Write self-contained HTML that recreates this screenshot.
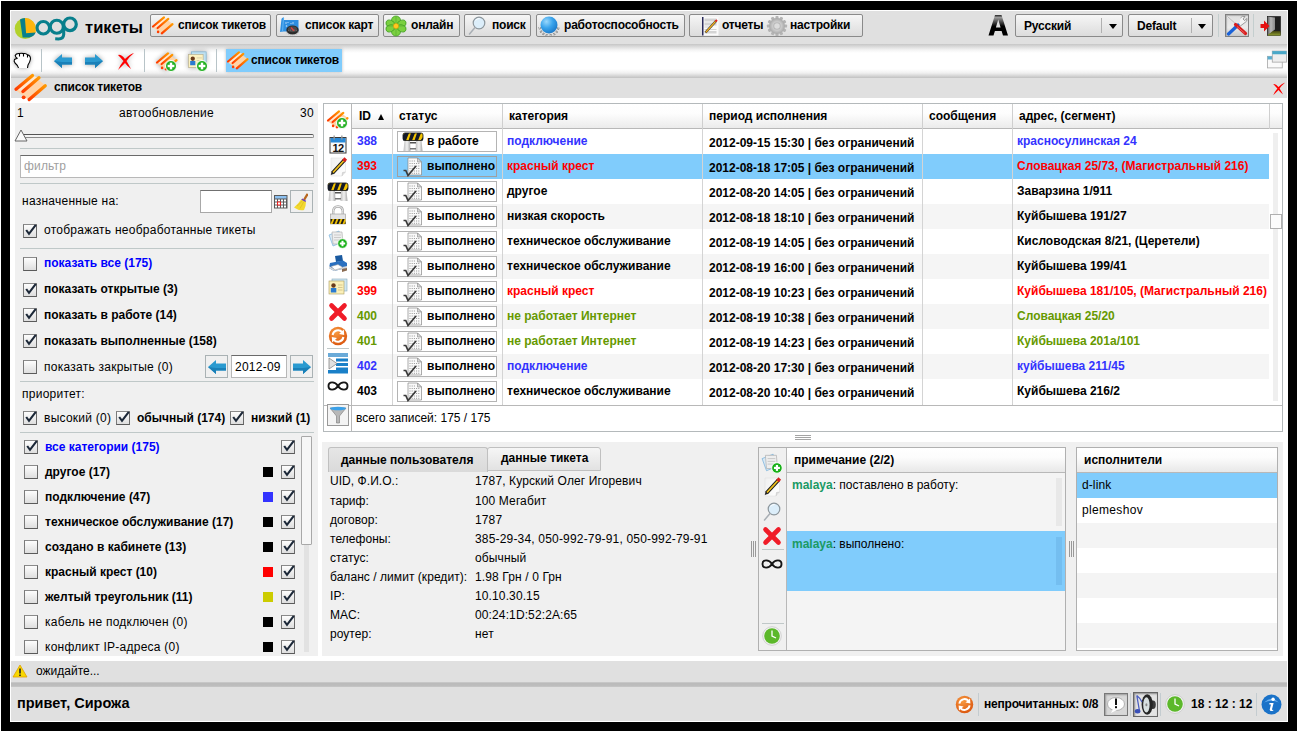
<!DOCTYPE html>
<html><head><meta charset="utf-8">
<style>
*{box-sizing:border-box;}
html,body{margin:0;padding:0;width:1298px;height:732px;overflow:hidden;background:#fff;font-family:"Liberation Sans",sans-serif;font-size:12px;color:#000;}
.a{position:absolute;}
#frame{left:1px;top:1px;width:1296px;height:730px;background:#000;}
#inner{left:10px;top:10px;width:1278px;height:712px;background:#fff;}
#tb1{left:11px;top:11px;width:1276px;height:33px;background:#e1e1e1;}
#tb2{left:11px;top:44px;width:1276px;height:33px;background:#fff;}
#title{left:11px;top:77px;width:1276px;height:21px;background:#e1e1e1;}
#left{left:15px;top:103px;width:303px;height:553px;background:#f0f0f0;}
#grid{left:323px;top:103px;width:959px;height:328px;background:#fff;border:1px solid #aaa;}
#lower{left:322px;top:442px;width:960px;height:214px;background:#f0f0f0;}
#status{left:11px;top:661px;width:1276px;height:21px;background:#e1e1e1;}
#bar{left:11px;top:682px;width:1276px;height:4px;background:#bbb;}
#bottom{left:11px;top:686px;width:1276px;height:35px;background:#e1e1e1;}
.btn{position:absolute;height:23px;letter-spacing:-0.2px;border:1px solid #8a8a8a;border-radius:2px;background:linear-gradient(#f6f6f6,#dcdcdc);font-weight:bold;line-height:21px;white-space:nowrap;}
.b{font-weight:bold;}
.cb{position:absolute;width:14px;height:14px;border:1px solid #6e6e6e;border-color:#8a8a8a #6a6a6a #5a5a5a #7a7a7a;background:linear-gradient(#fdfdfd,#dedede);}
.sep{position:absolute;height:1px;background:#bfc8c8;}
.t{position:absolute;white-space:nowrap;line-height:14px;letter-spacing:0.25px;}
.t.b{letter-spacing:0;}
.bl{color:#0000ff;}

</style></head><body>
<div class="a" id="frame"></div>
<div class="a" id="inner"></div>

<svg width="0" height="0" style="position:absolute">
<defs>
<linearGradient id="g-or" x1="0" y1="1" x2="1" y2="0"><stop offset="0" stop-color="#ff3c00"/><stop offset="1" stop-color="#ff9800"/></linearGradient>
<symbol id="i-list" viewBox="0 0 24 22">
<polygon points="1.8,12.2 13,2.2 22,9.2 10.8,19" fill="#ffd4a8"/>
<polygon points="2,11.5 13,2.4 17.3,3.9 6.6,13" fill="#ffe8d0"/>
<g stroke="url(#g-or)" stroke-width="2.2" stroke-linecap="round">
<line x1="2" y1="11.5" x2="13" y2="2.4"/><line x1="6.6" y1="13" x2="17.3" y2="3.9"/><line x1="10.8" y1="18.4" x2="21.5" y2="9.2"/></g>
<circle cx="7.1" cy="16.9" r="1.3" fill="#ff4000"/>
</symbol>
<symbol id="i-plus" viewBox="0 0 10 10">
<circle cx="5" cy="5" r="4.6" fill="#22b022" stroke="#fff" stroke-width="0.8"/>
<rect x="2.2" y="4" width="5.6" height="2" fill="#fff"/><rect x="4" y="2.2" width="2" height="5.6" fill="#fff"/>
</symbol>
<symbol id="i-map" viewBox="0 0 22 20">
<path d="M1,16 L2.5,3 Q3,1 5,1.5 L5,4 L19.5,4 L19.5,15.5 L4,15.5 Q2,15.5 1,16 Z" fill="#2e8ee0"/>
<path d="M4.5,2 L3.5,15.5" stroke="#5ab0f0" stroke-width="1.2"/>
<g fill="#bfe0fa"><circle cx="7" cy="7" r="0.8"/><circle cx="9" cy="6.5" r="0.6"/><circle cx="7.5" cy="10" r="0.8"/><circle cx="12" cy="7.5" r="0.6"/><circle cx="14" cy="7" r="0.8"/></g>
<ellipse cx="13.5" cy="14" rx="6.2" ry="4.6" fill="#2a2a2a"/>
<ellipse cx="13.5" cy="13.2" rx="4.6" ry="3" fill="#4a4a4a"/>
<ellipse cx="13.5" cy="16.5" rx="6" ry="2.5" fill="none" stroke="#999" stroke-width="0.6" stroke-dasharray="1 1"/>
<path d="M12,11.5 L15,14.8" stroke="#e04040" stroke-width="1.3"/>
</symbol>
<symbol id="i-icq" viewBox="0 0 22 22">
<g fill="#7ad040" stroke="#3e9a22" stroke-width="0.7">
<ellipse cx="11" cy="5.6" rx="4.6" ry="4.6"/><ellipse cx="11" cy="16.4" rx="4.6" ry="4.6"/>
<ellipse cx="5.2" cy="8.6" rx="4.4" ry="3.4" transform="rotate(20 5.2 8.6)"/><ellipse cx="16.8" cy="8.6" rx="4.4" ry="3.4" transform="rotate(-20 16.8 8.6)"/>
<ellipse cx="5.2" cy="13.4" rx="4.4" ry="3.4" transform="rotate(-20 5.2 13.4)"/><ellipse cx="16.8" cy="13.4" rx="4.4" ry="3.4" transform="rotate(20 16.8 13.4)"/>
</g>
<g stroke="#5ab030" stroke-width="0.7"><line x1="11" y1="2" x2="11" y2="20"/><line x1="1.5" y1="11" x2="20.5" y2="11"/></g>
<circle cx="11" cy="11" r="2.6" fill="#ffc820" stroke="#e09000" stroke-width="0.5"/>
</symbol>
<symbol id="i-search" viewBox="0 0 20 20">
<circle cx="12" cy="8" r="5.8" fill="#dceefa" stroke="#8c969c" stroke-width="1.2"/>
<path d="M8.5,5.5 Q10,3.5 12.5,3.5" fill="none" stroke="#fff" stroke-width="1"/>
<line x1="8" y1="12.5" x2="2.5" y2="19" stroke="#a8aeb4" stroke-width="1.5" stroke-linecap="round"/>
</symbol>
<symbol id="i-globe" viewBox="0 0 24 20">
<radialGradient id="g-globe" cx="0.35" cy="0.3" r="0.75"><stop offset="0" stop-color="#9ad8fc"/><stop offset="0.5" stop-color="#3aa4ec"/><stop offset="1" stop-color="#1a78c8"/></radialGradient>
<path d="M2.5,11 Q3.5,19 12,19.5 Q20.5,19 21.5,11" fill="none" stroke="#666" stroke-width="2" stroke-dasharray="2 1.6"/>
<path d="M2.5,11 Q3.5,19 12,19.5 Q20.5,19 21.5,11" fill="none" stroke="#eee" stroke-width="1" stroke-dasharray="2 1.6"/>
<circle cx="12" cy="9" r="8.5" fill="url(#g-globe)"/>
</symbol>
<symbol id="i-report" viewBox="0 0 18 20">
<rect x="1" y="1" width="16.5" height="18.5" fill="#fafafa"/>
<rect x="1" y="1" width="1.5" height="18.5" fill="#2a2a5a"/>
<g fill="#d4d4d4"><rect x="3.5" y="2.5" width="12" height="3"/><rect x="3.5" y="6.5" width="12" height="3"/><rect x="3.5" y="10.5" width="8" height="1"/><rect x="3.5" y="13" width="12" height="1"/><rect x="3.5" y="15" width="12" height="2.5"/></g>
<line x1="4.5" y1="16.5" x2="15" y2="5" stroke="#333" stroke-width="2.4"/>
<line x1="4.8" y1="16.2" x2="14.7" y2="5.3" stroke="#f0b020" stroke-width="1.3"/>
<line x1="14.5" y1="5.5" x2="16" y2="4" stroke="#e02020" stroke-width="2"/>
</symbol>
<symbol id="i-gear" viewBox="0 0 24 24">
<radialGradient id="g-gear"><stop offset="0.3" stop-color="#e0e0e0"/><stop offset="1" stop-color="#a8a8a8"/></radialGradient>
<g fill="#b4b4b4"><rect x="10.3" y="1" width="3.4" height="5" rx="1" transform="rotate(0 12 12)"/><rect x="10.3" y="1" width="3.4" height="5" rx="1" transform="rotate(30 12 12)"/><rect x="10.3" y="1" width="3.4" height="5" rx="1" transform="rotate(60 12 12)"/><rect x="10.3" y="1" width="3.4" height="5" rx="1" transform="rotate(90 12 12)"/><rect x="10.3" y="1" width="3.4" height="5" rx="1" transform="rotate(120 12 12)"/><rect x="10.3" y="1" width="3.4" height="5" rx="1" transform="rotate(150 12 12)"/><rect x="10.3" y="1" width="3.4" height="5" rx="1" transform="rotate(180 12 12)"/><rect x="10.3" y="1" width="3.4" height="5" rx="1" transform="rotate(210 12 12)"/><rect x="10.3" y="1" width="3.4" height="5" rx="1" transform="rotate(240 12 12)"/><rect x="10.3" y="1" width="3.4" height="5" rx="1" transform="rotate(270 12 12)"/><rect x="10.3" y="1" width="3.4" height="5" rx="1" transform="rotate(300 12 12)"/><rect x="10.3" y="1" width="3.4" height="5" rx="1" transform="rotate(330 12 12)"/></g>
<circle cx="12" cy="12" r="8.6" fill="url(#g-gear)"/>
<circle cx="12" cy="12" r="4.2" fill="#b8b8b8"/><circle cx="12" cy="12" r="3" fill="#dcdcdc"/>
</symbol>

<symbol id="i-redx" viewBox="0 0 20 20">
<path d="M3,4 Q6,3 10,8 Q15,3 19,2 Q14,6 11.5,10 Q14,14 16,18 Q12,15 10,12 Q6,16 3,19 Q5,14 8.5,10 Q5,6 3,4 Z" fill="#f00"/>
</symbol>
<symbol id="i-arrowL" viewBox="0 0 20 16">
<path d="M1,8 L9,1 L9,4.5 L19,4.5 L19,11.5 L9,11.5 L9,15 Z" fill="#2a9ad0"/>
<path d="M1,8 L9,15 L9,11.5 L19,11.5 L19,9 L9,9 Z" fill="#1a80b8"/>
</symbol>
<symbol id="i-hand" viewBox="0 0 18 16">
<path d="M4,15 Q3,11 1,8 Q0.5,6 2.5,6.5 L4,8 L3.5,3 Q4,1 6,1.5 L6.5,2 Q8,0.5 9.5,1.5 Q11,0.5 12.5,1.8 Q14.5,1.5 15.5,3 Q16.5,7 15,11 L14,15 Z" fill="#fff" stroke="#000" stroke-width="1.2" stroke-linejoin="round"/>
</symbol>
<symbol id="i-card" viewBox="0 0 24 22">
<rect x="5" y="1" width="17" height="13" fill="#bfe0f0" stroke="#7ab0d0" stroke-width="0.8"/>
<rect x="1.5" y="4" width="17" height="15" fill="#fdf2c0" stroke="#b8b090" stroke-width="0.8"/>
<circle cx="6.5" cy="9" r="2.5" fill="#6a3a1a"/><rect x="3.5" y="11.5" width="6" height="5" fill="#2a7ad0"/>
<g stroke="#c8c0a0" stroke-width="0.8"><line x1="11" y1="8" x2="17" y2="8"/><line x1="11" y1="11" x2="17" y2="11"/><line x1="11" y1="14" x2="17" y2="14"/></g>
</symbol>
<symbol id="i-windows" viewBox="0 0 20 18">
<rect x="1.5" y="6" width="14" height="11" fill="#fafafa" stroke="#aaa" stroke-width="0.8"/><rect x="1.5" y="6" width="14" height="3" fill="#5aaed0"/>
<rect x="6" y="1" width="13.5" height="10.5" fill="#eee" stroke="#aaa" stroke-width="0.8"/><rect x="6" y="1" width="13.5" height="3" fill="#4aa8c8"/>
</symbol>
<symbol id="i-tools" viewBox="0 0 22 21">
<line x1="1.5" y1="1.5" x2="11" y2="10" stroke="#e8e8e8" stroke-width="1.8"/>
<line x1="1.5" y1="1.5" x2="11" y2="10" stroke="#999" stroke-width="0.6"/>
<path d="M14.5,3 Q16,0.5 19,1.5 L17,4 L18.5,5.5 L21,3.5 Q21.5,6.5 19,7.5 L13,12" fill="#f4f4f4" stroke="#777" stroke-width="0.7"/>
<line x1="2.5" y1="19" x2="12" y2="10" stroke="#1a62d8" stroke-width="3.2" stroke-linecap="round"/>
<line x1="9.5" y1="9.5" x2="19.5" y2="18.5" stroke="#d81c1c" stroke-width="3.2" stroke-linecap="round"/>
<line x1="11" y1="11.5" x2="18.5" y2="18" stroke="#f07070" stroke-width="0.8"/>
</symbol>
<symbol id="i-exit" viewBox="0 0 22 20">
<linearGradient id="g-door" x1="0" x2="1"><stop offset="0" stop-color="#6a6a6a"/><stop offset="0.4" stop-color="#b8b8b8"/><stop offset="1" stop-color="#8a8a8a"/></linearGradient>
<linearGradient id="g-floor" x1="0" y1="0" x2="0" y2="1"><stop offset="0" stop-color="#404010"/><stop offset="1" stop-color="#90a030"/></linearGradient>
<rect x="7.5" y="0.5" width="13" height="19" fill="#1e1e1e" stroke="#111" stroke-width="0.6"/>
<rect x="8" y="15" width="12.5" height="4.5" fill="url(#g-floor)"/>
<path d="M8,0.8 L15,1.5 L15,13.5 L8,18.5 Z" fill="url(#g-door)"/>
<path d="M0.5,8 L4,8 L4,4.5 L9.5,10 L4,15.5 L4,12 L0.5,12 Z" fill="#e41010"/>
</symbol>

<symbol id="i-cal" viewBox="0 0 20 20">
<rect x="2" y="3.5" width="16" height="15.5" fill="#fafafa" stroke="#3a3a3a" stroke-width="1"/>
<rect x="2.5" y="4" width="15" height="4.5" fill="#2a8ad8"/>
<text x="10" y="17.6" text-anchor="middle" font-family="Liberation Sans" font-weight="bold" font-size="11" fill="#111" letter-spacing="-0.5">12</text>
<rect x="5.5" y="1.5" width="1.3" height="4" fill="#999"/><rect x="13.2" y="1.5" width="1.3" height="4" fill="#999"/>
</symbol>
<symbol id="i-pencil" viewBox="0 0 20 20">
<linearGradient id="g-paper" x1="0" y1="0" x2="1" y2="1"><stop offset="0" stop-color="#f0f0f0"/><stop offset="1" stop-color="#fff"/></linearGradient>
<path d="M3,1 L17.5,1 L17.5,15 L14,19 L3,19 Z" fill="url(#g-paper)" stroke="#e0e0e0" stroke-width="0.6"/>
<path d="M14,19 L14.5,15.5 L17.5,15" fill="#ddd" stroke="#bbb" stroke-width="0.5"/>
<line x1="4.5" y1="16" x2="16.5" y2="3" stroke="#1a1a1a" stroke-width="3.6"/>
<line x1="5" y1="15.5" x2="16" y2="3.5" stroke="#f2c21c" stroke-width="1.8"/>
<path d="M2.8,18 L3.6,14.5 L6,16.8 Z" fill="#222"/>
<line x1="15.5" y1="4" x2="17.8" y2="1.6" stroke="#d82020" stroke-width="3.6"/>
</symbol>
<symbol id="i-barrier" viewBox="0 0 22 20">
<linearGradient id="g-leg" x1="0" x2="1"><stop offset="0" stop-color="#bdbdbd"/><stop offset="0.5" stop-color="#f2f2f2"/><stop offset="1" stop-color="#a8a8a8"/></linearGradient>
<path d="M2.5,8 L8,8 L8.5,19 L1.5,19 Z" fill="url(#g-leg)"/><path d="M14,8 L19.5,8 L20.5,19 L13.5,19 Z" fill="url(#g-leg)"/>
<rect x="8" y="10" width="6" height="1.5" fill="#555"/><rect x="8" y="16" width="6" height="1.5" fill="#777"/>
<rect x="1" y="1" width="20" height="7.5" rx="2" fill="#f4c400" stroke="#111" stroke-width="0.8"/>
<g fill="#151a28"><path d="M1,3 L3,1 L7,1 L4,8.5 L1,8.5 Z"/><path d="M9,1 L13,1 L10,8.5 L6.5,8.5 Z"/><path d="M15,1 L19,1 L16,8.5 L12.5,8.5 Z"/><path d="M21,5 L21,8.5 L18.5,8.5 Z"/></g>
</symbol>
<symbol id="i-lock" viewBox="0 0 20 20">
<path d="M5.2,10 L5.2,6.5 Q5.2,1.5 10,1.5 Q14.8,1.5 14.8,6.5 L14.8,10" fill="none" stroke="#a8a8a8" stroke-width="2.4"/>
<path d="M5.2,10 L5.2,6.5 Q5.2,1.5 10,1.5 Q14.8,1.5 14.8,6.5 L14.8,10" fill="none" stroke="#f0f0f0" stroke-width="1"/>
<rect x="2.5" y="9" width="15" height="10" fill="#e4e4e4" stroke="#999" stroke-width="0.6"/>
<rect x="2.5" y="14" width="15" height="5" fill="#f0c000"/>
<g fill="#1a1a1a"><path d="M2.5,14 L4.5,14 L2.5,19 Z"/><path d="M6.5,14 L8.5,14 L6.5,19 L4.5,19 Z"/><path d="M10.5,14 L12.5,14 L10.5,19 L8.5,19 Z"/><path d="M14.5,14 L16.5,14 L14.5,19 L12.5,19 Z"/><path d="M17.5,16 L17.5,19 L16.5,19 Z"/></g>
</symbol>
<symbol id="i-docs" viewBox="0 0 20 20">
<path d="M1,6 L11,2 L15,13 L5,17 Z" fill="#d8e8f4" stroke="#6aaad8" stroke-width="0.6"/>
<path d="M4,3 L14,3 L15,15 L5,15 Z" fill="#eee" stroke="#aaa" stroke-width="0.6"/>
<g stroke="#bbb" stroke-width="0.7"><line x1="6" y1="6" x2="13" y2="6"/><line x1="6" y1="8.5" x2="13" y2="8.5"/><line x1="6" y1="11" x2="13" y2="11"/></g>
<circle cx="14.5" cy="14.5" r="4.8" fill="#18b018" stroke="#fff" stroke-width="0.8"/>
<rect x="11.8" y="13.5" width="5.4" height="2" fill="#fff"/><rect x="13.5" y="11.8" width="2" height="5.4" fill="#fff"/>
</symbol>
<symbol id="i-printer" viewBox="0 0 20 20">
<path d="M7,2 L14,1 L15,7 L8,8 Z" fill="#1a5aa0"/>
<path d="M2,9 L15,6.5 L19,9 L19,14 L6,17 L1,14 Z" fill="#2a70c0"/>
<path d="M1,14 L6,17 L19,14 L19,12 L6,15 L1,12 Z" fill="#d8d8d8"/>
<path d="M3,12.5 L10,10.5 L15,13.5 L7,16 Z" fill="#fff" stroke="#999" stroke-width="0.5"/>
<path d="M14,15 L19,14 L19,16.5 L14,18 Z" fill="#8a6a50"/>
</symbol>
<symbol id="i-idcard" viewBox="0 0 20 20">
<rect x="4" y="2" width="15" height="12" fill="#cfe6f2" stroke="#8ab" stroke-width="0.6"/>
<rect x="1" y="4" width="15" height="13" fill="#fbf0b8" stroke="#a89a60" stroke-width="0.6"/>
<circle cx="5.5" cy="8.5" r="2.2" fill="#6a3a1a"/><rect x="2.8" y="11" width="5.5" height="4.5" fill="#2a7ad0"/>
<g stroke="#c8b880" stroke-width="0.7"><line x1="10" y1="8" x2="14.5" y2="8"/><line x1="10" y1="10.5" x2="14.5" y2="10.5"/><line x1="10" y1="13" x2="14.5" y2="13"/></g>
</symbol>
<symbol id="i-bigx" viewBox="0 0 20 20">
<g stroke="#f01c28" stroke-width="4.6" stroke-linecap="round"><line x1="3.5" y1="3.5" x2="16.5" y2="16.5"/><line x1="16.5" y1="3.5" x2="3.5" y2="16.5"/></g>
</symbol>
<symbol id="i-refresh" viewBox="0 0 20 20">
<radialGradient id="g-ref" cx="0.4" cy="0.3" r="0.8"><stop offset="0" stop-color="#f89a40"/><stop offset="1" stop-color="#d8500a"/></radialGradient>
<circle cx="10" cy="10" r="9.2" fill="url(#g-ref)"/>
<path d="M4.6,9 A5.5,5.5 0 0 1 14.2,6.2" fill="none" stroke="#fff" stroke-width="2"/>
<path d="M15.8,3.6 L16.2,9 L11,8 Z" fill="#fff"/>
<path d="M15.4,11 A5.5,5.5 0 0 1 5.8,13.8" fill="none" stroke="#fff" stroke-width="2"/>
<path d="M4.2,16.4 L3.8,11 L9,12 Z" fill="#fff"/>
</symbol>
<symbol id="i-playlist" viewBox="0 0 20 22">
<rect x="0" y="1" width="20" height="4" fill="#6aaad8"/>
<g fill="#1a80c8"><rect x="8" y="6.5" width="12" height="3"/><rect x="8" y="11" width="12" height="3"/><rect x="8" y="15.5" width="12" height="2.5"/><rect x="0" y="18" width="20" height="3.5"/></g>
<path d="M1,6 L9,11.5 L1,17 Z" fill="#e0e0e0" stroke="#888" stroke-width="0.8"/>
</symbol>
<symbol id="i-inf" viewBox="0 0 22 14">
<path d="M11,7 C8,2.2 1.5,2.2 1.5,7 C1.5,11.8 8,11.8 11,7 C14,2.2 20.5,2.2 20.5,7 C20.5,11.8 14,11.8 11,7 Z" fill="none" stroke="#151515" stroke-width="1.9"/>
</symbol>
<symbol id="i-funnel" viewBox="0 0 22 22">
<rect x="0.5" y="0.5" width="21" height="21" fill="#f4f4f4" stroke="#999"/>
<path d="M3,4 L19,4 L12.5,12 L12.5,19 L9.5,19 L9.5,12 Z" fill="#b8b8b8" stroke="#777" stroke-width="0.6"/>
<ellipse cx="11" cy="4.5" rx="8" ry="1.8" fill="#3aa0e8"/>
</symbol>
<symbol id="i-donedoc" viewBox="0 0 20 20">
<path d="M5,1 L14.5,1 L18.5,5 L18.5,18 L5,18 Z" fill="#fafafa" stroke="#888" stroke-width="0.7"/>
<path d="M14.5,1 L14.5,5 L18.5,5 Z" fill="#d8d8d8" stroke="#888" stroke-width="0.6"/>
<g stroke="#8a8a8a" stroke-width="0.9" stroke-dasharray="1 1.2"><line x1="6.5" y1="4" x2="13" y2="4"/><line x1="6.5" y1="6.5" x2="17" y2="6.5"/><line x1="6.5" y1="9" x2="17" y2="9"/><line x1="6.5" y1="11.5" x2="17" y2="11.5"/><line x1="6.5" y1="14" x2="17" y2="14"/><line x1="6.5" y1="16.3" x2="17" y2="16.3"/></g>
<path d="M0.5,13.5 L2.8,13.5 L5,18.5 L13,9" fill="none" stroke="#3a3a3a" stroke-width="1.7"/>
</symbol>

<symbol id="i-clock" viewBox="0 0 20 20">
<circle cx="10" cy="10" r="9.3" fill="#f4f4f4" stroke="#bbb" stroke-width="0.6"/>
<circle cx="10" cy="10" r="7.8" fill="#5cb82a"/>
<path d="M10,4.5 L10,10 L14,12" fill="none" stroke="#fff" stroke-width="1.3"/>
</symbol>
<symbol id="i-warn" viewBox="0 0 16 14">
<path d="M8,1 L15,13 L1,13 Z" fill="#f8d800" stroke="#e0a000" stroke-width="0.8" stroke-linejoin="round"/>
<rect x="7.2" y="4.5" width="1.6" height="5" fill="#222"/><rect x="7.2" y="10.5" width="1.6" height="1.5" fill="#222"/>
</symbol>
<symbol id="i-info" viewBox="0 0 20 20">
<circle cx="10" cy="10" r="9.5" fill="#1a72c8"/>
<path d="M3,8 Q10,1 17,8 Q10,5 3,8 Z" fill="#6ab0f0"/>
<circle cx="11.5" cy="5" r="1.6" fill="#fff"/>
<path d="M8,8.5 L12,8.5 L10.5,14.5 Q10.5,15.5 12,15 L11.5,16 Q7.5,17 8.5,14 L9.5,10 L8,10 Z" fill="#fff"/>
</symbol>
<symbol id="i-speaker" viewBox="0 0 23 23">
<ellipse cx="18.8" cy="11.8" rx="3" ry="4.2" fill="#3a3a3a"/>
<ellipse cx="13.2" cy="11.5" rx="5.6" ry="10.2" fill="#262626"/>
<ellipse cx="12.4" cy="11.8" rx="3.2" ry="7.6" fill="#d8e0e0"/>
<ellipse cx="12.4" cy="11.8" rx="1" ry="1.5" fill="#888"/>
<path d="M2.8,2.5 L5.4,17.5 M2.8,2.5 Q6,5 8,9" fill="none" stroke="#4a5ec0" stroke-width="1.3"/>
<ellipse cx="3.6" cy="18.3" rx="2.8" ry="2.2" fill="#3a50b8"/>
</symbol>
<symbol id="i-bubble" viewBox="0 0 20 20">
<ellipse cx="10" cy="9" rx="8.5" ry="6.5" fill="#fff" stroke="#999" stroke-width="0.7"/>
<path d="M7,14 L5,18 L11,15 Z" fill="#fff"/>
<rect x="9" y="3.5" width="2" height="6.5" fill="#111"/><rect x="9" y="11.2" width="2" height="2" fill="#111"/>
</symbol>
</defs></svg>
<div class="a" style="left:11px;top:11px;width:1276px;height:33px;background:#e0e0e0;box-shadow:0 1px 1px rgba(0,0,0,0.12)"></div>
<svg class="a" style="left:14px;top:15px" width="66" height="27" viewBox="0 0 66 27">
<circle cx="11.2" cy="13.6" r="10.5" fill="#b2d12c"/>
<path d="M10.7,3.1 A10.5,10.5 0 0 1 21.7,13.6 L21.7,18 L10.7,18 Z" fill="#fdb50f"/>
<path d="M6,4.6 Q8,3.2 10.9,3 L12.1,18.2 L21.6,17.6 Q20.5,21.5 15,22.6 L8.6,22.6 Z" fill="#087f8c"/>
<circle cx="29.3" cy="12.8" r="6.25" fill="none" stroke="#087f8c" stroke-width="3.1"/>
<circle cx="42.8" cy="11.7" r="6.5" fill="none" stroke="#087f8c" stroke-width="3.1"/>
<path d="M49.7,11.5 L49.7,19.5 Q49.4,23.9 44.5,24 L41.2,23.8" fill="none" stroke="#087f8c" stroke-width="3.1"/>
<circle cx="56" cy="9.3" r="6.3" fill="none" stroke="#087f8c" stroke-width="3.2"/>
</svg>
<div class="a b" style="left:85px;top:17px;font-size:16.6px;line-height:22px">тикеты</div>
<div class="btn" style="left:150px;top:14px;width:121px"><svg class="a" style="left:0;top:0" width="24" height="22"><use href="#i-list" width="100%" height="100%"/></svg><span class="a" style="left:27px;top:0">список тикетов</span></div>
<div class="btn" style="left:276px;top:14px;width:103px"><svg class="a" style="left:2px;top:1px" width="22" height="20"><use href="#i-map" width="100%" height="100%"/></svg><span class="a" style="left:28px;top:0">список карт</span></div>
<div class="btn" style="left:383px;top:14px;width:77px"><svg class="a" style="left:1px;top:0px" width="22" height="22"><use href="#i-icq" width="100%" height="100%"/></svg><span class="a" style="left:27px;top:0">онлайн</span></div>
<div class="btn" style="left:464px;top:14px;width:67px"><svg class="a" style="left:2px;top:0px" width="20" height="20"><use href="#i-search" width="100%" height="100%"/></svg><span class="a" style="left:27px;top:0">поиск</span></div>
<div class="btn" style="left:536px;top:14px;width:149px"><svg class="a" style="left:0px;top:1px" width="24" height="20"><use href="#i-globe" width="100%" height="100%"/></svg><span class="a" style="left:27px;top:0">работоспособность</span></div>
<div class="btn" style="left:689px;top:14px;width:174px"><svg class="a" style="left:11px;top:1px" width="18" height="20"><use href="#i-report" width="100%" height="100%"/></svg><span class="a" style="left:32px;top:0">отчеты</span><svg class="a" style="left:76px;top:0px" width="22" height="22"><use href="#i-gear" width="100%" height="100%"/></svg><span class="a" style="left:100px;top:0">настройки</span></div>


<svg class="a" style="left:986px;top:13px" width="24" height="24" viewBox="0 0 24 24"><linearGradient id="g-A" x1="0" y1="0" x2="0" y2="1"><stop offset="0" stop-color="#222"/><stop offset="0.12" stop-color="#999"/><stop offset="0.55" stop-color="#000"/><stop offset="1" stop-color="#000"/></linearGradient>
<path d="M2.5,22.5 L9,2 L15.5,2 L22,22.5 L17,22.5 L15.6,18 L8.9,18 L7.5,22.5 Z M9.9,14.5 L14.6,14.5 L12.25,6.5 Z" fill="url(#g-A)" fill-rule="evenodd"/></svg>
<div class="btn" style="left:1015px;top:14px;width:108px;font-size:12px"><span class="a" style="left:8px;top:1px">Русский</span><div class="a" style="left:85px;top:3px;width:1px;height:15px;background:#b0b0b0"></div><div class="a" style="left:93px;top:9px;width:0;height:0;border-left:4px solid transparent;border-right:4px solid transparent;border-top:5px solid #000"></div></div>
<div class="btn" style="left:1128px;top:14px;width:85px"><span class="a" style="left:8px;top:1px">Default</span><div class="a" style="left:62px;top:3px;width:1px;height:15px;background:#b0b0b0"></div><div class="a" style="left:69px;top:9px;width:0;height:0;border-left:4px solid transparent;border-right:4px solid transparent;border-top:5px solid #000"></div></div>
<div class="a" style="left:1218px;top:14px;width:1px;height:23px;background:#c4cece"></div>
<div class="a" style="left:1225px;top:14px;width:24px;height:23px;border:1px solid #808080;background:linear-gradient(#dedede,#eaeaea 60%,#c8c8c8);box-shadow:inset 1px 1px 1px #b0b0b0"><svg class="a" style="left:0;top:0" width="22" height="21"><use href="#i-tools" width="100%" height="100%"/></svg></div>
<div class="a" style="left:1253px;top:14px;width:1px;height:23px;background:#c4cece"></div>
<svg class="a" style="left:1260px;top:16px" width="22" height="20"><use href="#i-exit" width="100%" height="100%"/></svg>

<div class="a" style="left:11px;top:44px;width:1276px;height:34px;background:linear-gradient(#c6c6c6 0px,#f4f4f4 6px,#fff 9px,#fff 25px,#f0f0f0 29px,#c6c6c6 33.5px,#d8d8d8 34px)"></div>
<svg class="a" style="left:10px;top:48px;filter:drop-shadow(0 0 2px rgba(0,0,0,0.35))" width="26" height="24" viewBox="0 0 26 24">
<path d="M5.2,7.5 Q6,5.2 9.5,5.5 Q11.5,5 13.5,5.6 Q16,5 17.5,6.8 Q20.5,7.5 20.5,11 Q20,14 18,17 L17.5,20 L8.5,20 Q8,17.5 5,15 Q3.5,13 4.5,11.5 Q6,10.5 7.5,10.5 Q5.5,9.5 5.2,7.5 Z" fill="#fff"/>
<path d="M8.5,20 Q8,17.5 5,15 Q3.5,13 4.5,11.5 Q6,10.5 7.5,10.5 Q5.5,9.5 5.2,7.5 Q6,5.2 9.5,5.5 Q11.5,5 13.5,5.6 Q16,5 17.5,6.8 Q20.5,7.5 20.5,11 Q20,14 18,17 L17.5,20 M9.5,6 L9.5,8.5 M13.5,6 L13.5,8.5 M17.5,7 L17.5,9.5" fill="none" stroke="#000" stroke-width="1.1"/>
</svg>
<div class="a" style="left:41px;top:49px;width:1px;height:23px;background:#b8c4c8"></div>
<svg class="a" style="left:53px;top:53px;filter:drop-shadow(0 0 2.5px rgba(0,0,0,0.35))" width="20" height="16"><use href="#i-arrowL" width="100%" height="100%"/></svg>
<svg class="a" style="left:84px;top:53px;transform:scaleX(-1);filter:drop-shadow(0 0 2.5px rgba(0,0,0,0.35))" width="20" height="16"><use href="#i-arrowL" width="100%" height="100%"/></svg>
<svg class="a" style="left:115px;top:51px;filter:drop-shadow(0 0 2.5px rgba(0,0,0,0.35))" width="20" height="20"><use href="#i-redx" width="100%" height="100%"/></svg>
<div class="a" style="left:144px;top:49px;width:1px;height:23px;background:#b8c4c8"></div>
<svg class="a" style="left:155px;top:51px;filter:drop-shadow(0 0 2.5px rgba(0,0,0,0.35))" width="24" height="22"><use href="#i-list" width="100%" height="100%"/></svg>
<svg class="a" style="left:165px;top:60px" width="12" height="12"><use href="#i-plus" width="100%" height="100%"/></svg>
<svg class="a" style="left:187px;top:51px;filter:drop-shadow(0 0 2.5px rgba(0,0,0,0.35))" width="21" height="19"><use href="#i-card" width="100%" height="100%"/></svg>
<svg class="a" style="left:196px;top:60px" width="12" height="12"><use href="#i-plus" width="100%" height="100%"/></svg>
<div class="a" style="left:216px;top:49px;width:1px;height:23px;background:#b8c4c8"></div>
<div class="a" style="left:226px;top:49px;width:116px;height:23px;background:#80ccfc;box-shadow:0 0 3px rgba(0,0,0,0.25)"></div>
<svg class="a" style="left:226px;top:50px" width="24" height="22"><use href="#i-list" width="100%" height="100%"/></svg>
<div class="a b" style="left:251px;top:53px;line-height:14px;letter-spacing:-0.2px">список тикетов</div>
<svg class="a" style="left:1266px;top:50px" width="21" height="19"><use href="#i-windows" width="100%" height="100%"/></svg>


<div class="a" style="left:11px;top:78px;width:1276px;height:20px;background:#e0e0e0"></div>
<svg class="a" style="left:13px;top:72px" width="36" height="33" viewBox="0 0 24 22"><use href="#i-list"/></svg>
<div class="a b" style="left:54px;top:80px;line-height:14px;letter-spacing:-0.2px">список тикетов</div>
<svg class="a" style="left:1271px;top:81px" width="15" height="15"><use href="#i-redx" width="100%" height="100%"/></svg>

<div class="a" style="left:15px;top:103px;width:303px;height:553px;background:#f0f0f0"></div>
<div class="t " style="left:17px;top:106px;">1</div>
<div class="t " style="left:119px;top:106px;">автообновление</div>
<div class="t " style="left:300px;top:106px;">30</div>
<div class="a" style="left:20px;top:134px;width:294px;height:4px;border:1px solid #8a8a8a;border-top-color:#555;border-radius:2px;background:#f4f4f4"></div>
<svg class="a" style="left:14px;top:129px" width="14" height="13"><path d="M7,1 L13,12 L1,12 Z" fill="#fafafa" stroke="#666" stroke-width="1"/></svg>
<div class="sep" style="left:20px;top:148px;width:294px"></div>
<div class="a" style="left:20px;top:155px;width:294px;height:23px;border:1px solid #b8b8b8;border-top-color:#6a6a6a;background:#fff"></div>
<div class="t " style="left:24px;top:159px;color:#a0a0a0;font-size:12px;letter-spacing:0.15px">фильтр</div>
<div class="sep" style="left:20px;top:183px;width:294px"></div>
<div class="t " style="left:22px;top:194px;">назначенные на:</div>
<div class="a" style="left:200px;top:190px;width:72px;height:23px;border:1px solid #a8a8a8;border-top-color:#707070;background:#fff"></div>
<svg class="a" style="left:274px;top:195px" width="14" height="14" viewBox="0 0 14 14"><rect x="0" y="0" width="13.5" height="13.5" fill="#5a5a5a"/><rect x="1" y="1" width="11.5" height="2.5" fill="#8cc0f0"/>
<g fill="#fff"><rect x="1" y="4.5" width="2" height="2"/><rect x="4" y="4.5" width="2" height="2"/><rect x="7" y="4.5" width="2" height="2"/><rect x="10" y="4.5" width="2" height="2"/><rect x="1" y="7.5" width="2" height="2"/><rect x="7" y="7.5" width="2" height="2"/><rect x="10" y="7.5" width="2" height="2"/><rect x="1" y="10.5" width="2" height="2"/><rect x="4" y="10.5" width="2" height="2"/><rect x="7" y="10.5" width="2" height="2"/><rect x="10" y="10.5" width="2" height="2"/></g>
<rect x="3.5" y="7" width="3" height="3" fill="#fff" stroke="#f02020" stroke-width="1"/></svg>
<div class="a" style="left:290px;top:190px;width:23px;height:23px;border:1px solid #aab2b4;background:#f0f0f0"><svg class="a" style="left:0;top:0" width="21" height="21" viewBox="0 0 21 21">
<path d="M15.5,2.5 Q17.5,2 17,4.5 L14,9.5 L12,8.5 Z" fill="#b86820"/>
<path d="M10.5,8 L15,10.5 Q15,16 13,19 Q8,20 3,16.5 Q8,12 10.5,8 Z" fill="#f2d830"/>
<path d="M6,15 Q9,13 11,10 M9,17.5 Q11,14 12.5,11" fill="none" stroke="#d8b818" stroke-width="0.6"/>
<path d="M10.8,8.2 L14.8,10.4" stroke="#6a40c0" stroke-width="1.5"/>
</svg></div>
<div class="cb on" style="left:23px;top:224px"><svg style="position:absolute;left:1px;top:-1px;overflow:visible" width="12" height="12" viewBox="0 0 12 12"><path d="M1.2,6 L4,9.8 L10.8,0.8" fill="none" stroke="#1c2838" stroke-width="2.1"/></svg></div>
<div class="t " style="left:44px;top:223px;">отображать необработанные тикеты</div>
<div class="sep" style="left:20px;top:248px;width:294px"></div>
<div class="cb" style="left:23px;top:257px"></div>
<div class="t b bl" style="left:44px;top:256px;">показать все (175)</div>
<div class="cb on" style="left:23px;top:283px"><svg style="position:absolute;left:1px;top:-1px;overflow:visible" width="12" height="12" viewBox="0 0 12 12"><path d="M1.2,6 L4,9.8 L10.8,0.8" fill="none" stroke="#1c2838" stroke-width="2.1"/></svg></div>
<div class="t b" style="left:44px;top:282px;">показать открытые (3)</div>
<div class="cb on" style="left:23px;top:308px"><svg style="position:absolute;left:1px;top:-1px;overflow:visible" width="12" height="12" viewBox="0 0 12 12"><path d="M1.2,6 L4,9.8 L10.8,0.8" fill="none" stroke="#1c2838" stroke-width="2.1"/></svg></div>
<div class="t b" style="left:44px;top:308px;">показать в работе (14)</div>
<div class="cb on" style="left:23px;top:334px"><svg style="position:absolute;left:1px;top:-1px;overflow:visible" width="12" height="12" viewBox="0 0 12 12"><path d="M1.2,6 L4,9.8 L10.8,0.8" fill="none" stroke="#1c2838" stroke-width="2.1"/></svg></div>
<div class="t b" style="left:44px;top:334px;">показать выполненные (158)</div>
<div class="cb" style="left:23px;top:360px"></div>
<div class="t " style="left:44px;top:360px;">показать закрытые (0)</div>
<div class="a" style="left:205px;top:355px;width:23px;height:23px;border:1px solid #aab2b4;background:#f0f0f0"><svg class="a" style="left:1px;top:3px" width="20" height="16"><use href="#i-arrowL" width="100%" height="100%"/></svg></div>
<div class="a" style="left:231px;top:355px;width:56px;height:23px;border:1px solid #b8b8b8;border-top-color:#6a6a6a;background:#fff"></div>
<div class="t " style="left:235px;top:360px;">2012-09</div>
<div class="a" style="left:290px;top:355px;width:23px;height:23px;border:1px solid #aab2b4;background:#f0f0f0"><svg class="a" style="left:1px;top:3px;transform:scaleX(-1)" width="20" height="16"><use href="#i-arrowL" width="100%" height="100%"/></svg></div>
<div class="sep" style="left:20px;top:381px;width:294px"></div>
<div class="t " style="left:22px;top:387px;">приоритет:</div>
<div class="cb on" style="left:23px;top:411px"><svg style="position:absolute;left:1px;top:-1px;overflow:visible" width="12" height="12" viewBox="0 0 12 12"><path d="M1.2,6 L4,9.8 L10.8,0.8" fill="none" stroke="#1c2838" stroke-width="2.1"/></svg></div>
<div class="t " style="left:44px;top:411px;">высокий (0)</div>
<div class="cb on" style="left:116px;top:411px"><svg style="position:absolute;left:1px;top:-1px;overflow:visible" width="12" height="12" viewBox="0 0 12 12"><path d="M1.2,6 L4,9.8 L10.8,0.8" fill="none" stroke="#1c2838" stroke-width="2.1"/></svg></div>
<div class="t b" style="left:137px;top:411px;">обычный (174)</div>
<div class="cb on" style="left:230px;top:411px"><svg style="position:absolute;left:1px;top:-1px;overflow:visible" width="12" height="12" viewBox="0 0 12 12"><path d="M1.2,6 L4,9.8 L10.8,0.8" fill="none" stroke="#1c2838" stroke-width="2.1"/></svg></div>
<div class="t b" style="left:251px;top:411px;">низкий (1)</div>
<div class="sep" style="left:20px;top:432px;width:294px"></div>
<div class="cb on" style="left:24px;top:440px"><svg style="position:absolute;left:1px;top:-1px;overflow:visible" width="12" height="12" viewBox="0 0 12 12"><path d="M1.2,6 L4,9.8 L10.8,0.8" fill="none" stroke="#1c2838" stroke-width="2.1"/></svg></div>
<div class="t b bl" style="left:45px;top:440px;">все категории (175)</div>
<div class="cb on" style="left:281px;top:440px"><svg style="position:absolute;left:1px;top:-1px;overflow:visible" width="12" height="12" viewBox="0 0 12 12"><path d="M1.2,6 L4,9.8 L10.8,0.8" fill="none" stroke="#1c2838" stroke-width="2.1"/></svg></div>
<div class="cb" style="left:24px;top:465px"></div>
<div class="t b" style="left:45px;top:465px;">другое (17)</div>
<div class="a" style="left:263px;top:467px;width:10px;height:10px;background:#000"></div>
<div class="cb on" style="left:281px;top:465px"><svg style="position:absolute;left:1px;top:-1px;overflow:visible" width="12" height="12" viewBox="0 0 12 12"><path d="M1.2,6 L4,9.8 L10.8,0.8" fill="none" stroke="#1c2838" stroke-width="2.1"/></svg></div>
<div class="cb" style="left:24px;top:490px"></div>
<div class="t b" style="left:45px;top:490px;">подключение (47)</div>
<div class="a" style="left:263px;top:492px;width:10px;height:10px;background:#3333ff"></div>
<div class="cb on" style="left:281px;top:490px"><svg style="position:absolute;left:1px;top:-1px;overflow:visible" width="12" height="12" viewBox="0 0 12 12"><path d="M1.2,6 L4,9.8 L10.8,0.8" fill="none" stroke="#1c2838" stroke-width="2.1"/></svg></div>
<div class="cb" style="left:24px;top:515px"></div>
<div class="t b" style="left:45px;top:515px;">техническое обслуживание (17)</div>
<div class="a" style="left:263px;top:517px;width:10px;height:10px;background:#000"></div>
<div class="cb on" style="left:281px;top:515px"><svg style="position:absolute;left:1px;top:-1px;overflow:visible" width="12" height="12" viewBox="0 0 12 12"><path d="M1.2,6 L4,9.8 L10.8,0.8" fill="none" stroke="#1c2838" stroke-width="2.1"/></svg></div>
<div class="cb" style="left:24px;top:540px"></div>
<div class="t b" style="left:45px;top:540px;">создано в кабинете (13)</div>
<div class="a" style="left:263px;top:542px;width:10px;height:10px;background:#000"></div>
<div class="cb on" style="left:281px;top:540px"><svg style="position:absolute;left:1px;top:-1px;overflow:visible" width="12" height="12" viewBox="0 0 12 12"><path d="M1.2,6 L4,9.8 L10.8,0.8" fill="none" stroke="#1c2838" stroke-width="2.1"/></svg></div>
<div class="cb" style="left:24px;top:565px"></div>
<div class="t b" style="left:45px;top:565px;">красный крест (10)</div>
<div class="a" style="left:263px;top:567px;width:10px;height:10px;background:#f00"></div>
<div class="cb on" style="left:281px;top:565px"><svg style="position:absolute;left:1px;top:-1px;overflow:visible" width="12" height="12" viewBox="0 0 12 12"><path d="M1.2,6 L4,9.8 L10.8,0.8" fill="none" stroke="#1c2838" stroke-width="2.1"/></svg></div>
<div class="cb" style="left:24px;top:590px"></div>
<div class="t b" style="left:45px;top:590px;">желтый треугольник (11)</div>
<div class="a" style="left:263px;top:592px;width:10px;height:10px;background:#cccc00"></div>
<div class="cb on" style="left:281px;top:590px"><svg style="position:absolute;left:1px;top:-1px;overflow:visible" width="12" height="12" viewBox="0 0 12 12"><path d="M1.2,6 L4,9.8 L10.8,0.8" fill="none" stroke="#1c2838" stroke-width="2.1"/></svg></div>
<div class="cb" style="left:24px;top:615px"></div>
<div class="t " style="left:45px;top:615px;">кабель не подключен (0)</div>
<div class="a" style="left:263px;top:617px;width:10px;height:10px;background:#000"></div>
<div class="cb on" style="left:281px;top:615px"><svg style="position:absolute;left:1px;top:-1px;overflow:visible" width="12" height="12" viewBox="0 0 12 12"><path d="M1.2,6 L4,9.8 L10.8,0.8" fill="none" stroke="#1c2838" stroke-width="2.1"/></svg></div>
<div class="cb" style="left:24px;top:640px"></div>
<div class="t " style="left:45px;top:640px;">конфликт IP-адреса (0)</div>
<div class="a" style="left:263px;top:642px;width:10px;height:10px;background:#000"></div>
<div class="cb on" style="left:281px;top:640px"><svg style="position:absolute;left:1px;top:-1px;overflow:visible" width="12" height="12" viewBox="0 0 12 12"><path d="M1.2,6 L4,9.8 L10.8,0.8" fill="none" stroke="#1c2838" stroke-width="2.1"/></svg></div>
<div class="a" style="left:304px;top:437px;width:5px;height:215px;background:#e2e2e2"></div>
<div class="a" style="left:301px;top:436px;width:11px;height:109px;border:1px solid #a8a8a8;border-width:1px 1.5px;background:#f6f6f6;border-radius:1px"></div>
<div class="a" style="left:323px;top:103px;width:960px;height:329px;background:#fff;border:1px solid #b4b9bb"></div>
<div class="a" style="left:352px;top:104px;width:930px;height:25px;background:linear-gradient(#fff,#fdfdfd 40%,#ebebeb);border-bottom:1px solid #b8b8b8"></div>
<div class="a" style="left:351px;top:104px;width:1px;height:327px;background:#b8b8b8"></div>
<div class="a" style="left:324px;top:104px;width:27px;height:327px;background:#fff"></div>
<div class="a" style="left:392px;top:104px;width:1px;height:301px;background:#cfcfcf"></div>
<div class="a" style="left:502px;top:104px;width:1px;height:301px;background:#cfcfcf"></div>
<div class="a" style="left:702px;top:104px;width:1px;height:301px;background:#cfcfcf"></div>
<div class="a" style="left:922px;top:104px;width:1px;height:301px;background:#cfcfcf"></div>
<div class="a" style="left:1012px;top:104px;width:1px;height:301px;background:#cfcfcf"></div>
<div class="a" style="left:1269px;top:104px;width:1px;height:25px;background:#cfcfcf"></div>
<div class="t b" style="left:359px;top:109px">ID</div>
<div class="t b" style="left:399px;top:109px">статус</div>
<div class="t b" style="left:509px;top:109px">категория</div>
<div class="t b" style="left:709px;top:109px">период исполнения</div>
<div class="t b" style="left:929px;top:109px">сообщения</div>
<div class="t b" style="left:1019px;top:109px">адрес, (сегмент)</div>
<div class="a" style="left:378px;top:114px;width:0;height:0;border-left:3px solid transparent;border-right:3px solid transparent;border-bottom:6px solid #000"></div>
<div class="a" style="left:352px;top:129px;width:917px;height:25px;background:#fff"></div>
<div class="a" style="left:392px;top:129px;width:1px;height:25px;background:#d4d4d4"></div>
<div class="a" style="left:502px;top:129px;width:1px;height:25px;background:#d4d4d4"></div>
<div class="a" style="left:702px;top:129px;width:1px;height:25px;background:#d4d4d4"></div>
<div class="a" style="left:922px;top:129px;width:1px;height:25px;background:#d4d4d4"></div>
<div class="a" style="left:1012px;top:129px;width:1px;height:25px;background:#d4d4d4"></div>
<div class="t b" style="left:357px;top:134px;color:#3333ff">388</div>
<div class="a" style="left:397px;top:131px;width:100px;height:21px;border:1px solid #b4b4b4;background:#fff"></div>
<svg class="a" style="left:402px;top:132px" width="22" height="20"><use href="#i-barrier" width="100%" height="100%"/></svg>
<div class="t b" style="left:427px;top:134px">в работе</div>
<div class="t b" style="left:507px;top:134px;color:#3333ff">подключение</div>
<div class="t b" style="left:709px;top:136px">2012-09-15 15:30 | без ограничений</div>
<div class="t b" style="left:1017px;top:134px;color:#3333ff">красносулинская 24</div>
<div class="a" style="left:352px;top:154px;width:917px;height:25px;background:#80ccfc"></div>
<div class="a" style="left:392px;top:154px;width:1px;height:25px;background:#d4d4d4"></div>
<div class="a" style="left:502px;top:154px;width:1px;height:25px;background:#d4d4d4"></div>
<div class="a" style="left:702px;top:154px;width:1px;height:25px;background:#d4d4d4"></div>
<div class="a" style="left:922px;top:154px;width:1px;height:25px;background:#d4d4d4"></div>
<div class="a" style="left:1012px;top:154px;width:1px;height:25px;background:#d4d4d4"></div>
<div class="t b" style="left:357px;top:159px;color:#ff0000">393</div>
<div class="a" style="left:397px;top:156px;width:100px;height:21px;border:1px solid #a0a0a0;background:transparent"></div>
<svg class="a" style="left:402px;top:157px" width="22" height="20"><use href="#i-donedoc" width="100%" height="100%"/></svg>
<div class="t b" style="left:427px;top:159px">выполнено</div>
<div class="t b" style="left:507px;top:159px;color:#ff0000">красный крест</div>
<div class="t b" style="left:709px;top:161px">2012-08-18 17:05 | без ограничений</div>
<div class="t b" style="left:1017px;top:159px;color:#ff0000">Словацкая 25/73, (Магистральный 216)</div>
<div class="a" style="left:352px;top:179px;width:917px;height:25px;background:#fff"></div>
<div class="a" style="left:392px;top:179px;width:1px;height:25px;background:#d4d4d4"></div>
<div class="a" style="left:502px;top:179px;width:1px;height:25px;background:#d4d4d4"></div>
<div class="a" style="left:702px;top:179px;width:1px;height:25px;background:#d4d4d4"></div>
<div class="a" style="left:922px;top:179px;width:1px;height:25px;background:#d4d4d4"></div>
<div class="a" style="left:1012px;top:179px;width:1px;height:25px;background:#d4d4d4"></div>
<div class="t b" style="left:357px;top:184px;color:#000">395</div>
<div class="a" style="left:397px;top:181px;width:100px;height:21px;border:1px solid #b4b4b4;background:#fff"></div>
<svg class="a" style="left:402px;top:182px" width="22" height="20"><use href="#i-donedoc" width="100%" height="100%"/></svg>
<div class="t b" style="left:427px;top:184px">выполнено</div>
<div class="t b" style="left:507px;top:184px;color:#000">другое</div>
<div class="t b" style="left:709px;top:186px">2012-08-20 14:05 | без ограничений</div>
<div class="t b" style="left:1017px;top:184px;color:#000">Заварзина 1/911</div>
<div class="a" style="left:352px;top:204px;width:917px;height:25px;background:#f5f5f5"></div>
<div class="a" style="left:392px;top:204px;width:1px;height:25px;background:#d4d4d4"></div>
<div class="a" style="left:502px;top:204px;width:1px;height:25px;background:#d4d4d4"></div>
<div class="a" style="left:702px;top:204px;width:1px;height:25px;background:#d4d4d4"></div>
<div class="a" style="left:922px;top:204px;width:1px;height:25px;background:#d4d4d4"></div>
<div class="a" style="left:1012px;top:204px;width:1px;height:25px;background:#d4d4d4"></div>
<div class="t b" style="left:357px;top:209px;color:#000">396</div>
<div class="a" style="left:397px;top:206px;width:100px;height:21px;border:1px solid #b4b4b4;background:#fff"></div>
<svg class="a" style="left:402px;top:207px" width="22" height="20"><use href="#i-donedoc" width="100%" height="100%"/></svg>
<div class="t b" style="left:427px;top:209px">выполнено</div>
<div class="t b" style="left:507px;top:209px;color:#000">низкая скорость</div>
<div class="t b" style="left:709px;top:211px">2012-08-18 18:10 | без ограничений</div>
<div class="t b" style="left:1017px;top:209px;color:#000">Куйбышева 191/27</div>
<div class="a" style="left:352px;top:229px;width:917px;height:25px;background:#fff"></div>
<div class="a" style="left:392px;top:229px;width:1px;height:25px;background:#d4d4d4"></div>
<div class="a" style="left:502px;top:229px;width:1px;height:25px;background:#d4d4d4"></div>
<div class="a" style="left:702px;top:229px;width:1px;height:25px;background:#d4d4d4"></div>
<div class="a" style="left:922px;top:229px;width:1px;height:25px;background:#d4d4d4"></div>
<div class="a" style="left:1012px;top:229px;width:1px;height:25px;background:#d4d4d4"></div>
<div class="t b" style="left:357px;top:234px;color:#000">397</div>
<div class="a" style="left:397px;top:231px;width:100px;height:21px;border:1px solid #b4b4b4;background:#fff"></div>
<svg class="a" style="left:402px;top:232px" width="22" height="20"><use href="#i-donedoc" width="100%" height="100%"/></svg>
<div class="t b" style="left:427px;top:234px">выполнено</div>
<div class="t b" style="left:507px;top:234px;color:#000">техническое обслуживание</div>
<div class="t b" style="left:709px;top:236px">2012-08-19 14:05 | без ограничений</div>
<div class="t b" style="left:1017px;top:234px;color:#000">Кисловодская 8/21, (Церетели)</div>
<div class="a" style="left:352px;top:254px;width:917px;height:25px;background:#f5f5f5"></div>
<div class="a" style="left:392px;top:254px;width:1px;height:25px;background:#d4d4d4"></div>
<div class="a" style="left:502px;top:254px;width:1px;height:25px;background:#d4d4d4"></div>
<div class="a" style="left:702px;top:254px;width:1px;height:25px;background:#d4d4d4"></div>
<div class="a" style="left:922px;top:254px;width:1px;height:25px;background:#d4d4d4"></div>
<div class="a" style="left:1012px;top:254px;width:1px;height:25px;background:#d4d4d4"></div>
<div class="t b" style="left:357px;top:259px;color:#000">398</div>
<div class="a" style="left:397px;top:256px;width:100px;height:21px;border:1px solid #b4b4b4;background:#fff"></div>
<svg class="a" style="left:402px;top:257px" width="22" height="20"><use href="#i-donedoc" width="100%" height="100%"/></svg>
<div class="t b" style="left:427px;top:259px">выполнено</div>
<div class="t b" style="left:507px;top:259px;color:#000">техническое обслуживание</div>
<div class="t b" style="left:709px;top:261px">2012-08-19 16:00 | без ограничений</div>
<div class="t b" style="left:1017px;top:259px;color:#000">Куйбышева 199/41</div>
<div class="a" style="left:352px;top:279px;width:917px;height:25px;background:#fff"></div>
<div class="a" style="left:392px;top:279px;width:1px;height:25px;background:#d4d4d4"></div>
<div class="a" style="left:502px;top:279px;width:1px;height:25px;background:#d4d4d4"></div>
<div class="a" style="left:702px;top:279px;width:1px;height:25px;background:#d4d4d4"></div>
<div class="a" style="left:922px;top:279px;width:1px;height:25px;background:#d4d4d4"></div>
<div class="a" style="left:1012px;top:279px;width:1px;height:25px;background:#d4d4d4"></div>
<div class="t b" style="left:357px;top:284px;color:#ff0000">399</div>
<div class="a" style="left:397px;top:281px;width:100px;height:21px;border:1px solid #b4b4b4;background:#fff"></div>
<svg class="a" style="left:402px;top:282px" width="22" height="20"><use href="#i-donedoc" width="100%" height="100%"/></svg>
<div class="t b" style="left:427px;top:284px">выполнено</div>
<div class="t b" style="left:507px;top:284px;color:#ff0000">красный крест</div>
<div class="t b" style="left:709px;top:286px">2012-08-19 10:23 | без ограничений</div>
<div class="t b" style="left:1017px;top:284px;color:#ff0000">Куйбышева 181/105, (Магистральный 216)</div>
<div class="a" style="left:352px;top:304px;width:917px;height:25px;background:#f5f5f5"></div>
<div class="a" style="left:392px;top:304px;width:1px;height:25px;background:#d4d4d4"></div>
<div class="a" style="left:502px;top:304px;width:1px;height:25px;background:#d4d4d4"></div>
<div class="a" style="left:702px;top:304px;width:1px;height:25px;background:#d4d4d4"></div>
<div class="a" style="left:922px;top:304px;width:1px;height:25px;background:#d4d4d4"></div>
<div class="a" style="left:1012px;top:304px;width:1px;height:25px;background:#d4d4d4"></div>
<div class="t b" style="left:357px;top:309px;color:#669900">400</div>
<div class="a" style="left:397px;top:306px;width:100px;height:21px;border:1px solid #b4b4b4;background:#fff"></div>
<svg class="a" style="left:402px;top:307px" width="22" height="20"><use href="#i-donedoc" width="100%" height="100%"/></svg>
<div class="t b" style="left:427px;top:309px">выполнено</div>
<div class="t b" style="left:507px;top:309px;color:#669900">не работает Интернет</div>
<div class="t b" style="left:709px;top:311px">2012-08-19 10:38 | без ограничений</div>
<div class="t b" style="left:1017px;top:309px;color:#669900">Словацкая 25/20</div>
<div class="a" style="left:352px;top:329px;width:917px;height:25px;background:#fff"></div>
<div class="a" style="left:392px;top:329px;width:1px;height:25px;background:#d4d4d4"></div>
<div class="a" style="left:502px;top:329px;width:1px;height:25px;background:#d4d4d4"></div>
<div class="a" style="left:702px;top:329px;width:1px;height:25px;background:#d4d4d4"></div>
<div class="a" style="left:922px;top:329px;width:1px;height:25px;background:#d4d4d4"></div>
<div class="a" style="left:1012px;top:329px;width:1px;height:25px;background:#d4d4d4"></div>
<div class="t b" style="left:357px;top:334px;color:#669900">401</div>
<div class="a" style="left:397px;top:331px;width:100px;height:21px;border:1px solid #b4b4b4;background:#fff"></div>
<svg class="a" style="left:402px;top:332px" width="22" height="20"><use href="#i-donedoc" width="100%" height="100%"/></svg>
<div class="t b" style="left:427px;top:334px">выполнено</div>
<div class="t b" style="left:507px;top:334px;color:#669900">не работает Интернет</div>
<div class="t b" style="left:709px;top:336px">2012-08-19 14:23 | без ограничений</div>
<div class="t b" style="left:1017px;top:334px;color:#669900">Куйбышева 201a/101</div>
<div class="a" style="left:352px;top:354px;width:917px;height:25px;background:#f5f5f5"></div>
<div class="a" style="left:392px;top:354px;width:1px;height:25px;background:#d4d4d4"></div>
<div class="a" style="left:502px;top:354px;width:1px;height:25px;background:#d4d4d4"></div>
<div class="a" style="left:702px;top:354px;width:1px;height:25px;background:#d4d4d4"></div>
<div class="a" style="left:922px;top:354px;width:1px;height:25px;background:#d4d4d4"></div>
<div class="a" style="left:1012px;top:354px;width:1px;height:25px;background:#d4d4d4"></div>
<div class="t b" style="left:357px;top:359px;color:#3333ff">402</div>
<div class="a" style="left:397px;top:356px;width:100px;height:21px;border:1px solid #b4b4b4;background:#fff"></div>
<svg class="a" style="left:402px;top:357px" width="22" height="20"><use href="#i-donedoc" width="100%" height="100%"/></svg>
<div class="t b" style="left:427px;top:359px">выполнено</div>
<div class="t b" style="left:507px;top:359px;color:#3333ff">подключение</div>
<div class="t b" style="left:709px;top:361px">2012-08-20 17:30 | без ограничений</div>
<div class="t b" style="left:1017px;top:359px;color:#3333ff">куйбышева 211/45</div>
<div class="a" style="left:352px;top:379px;width:917px;height:25px;background:#fff"></div>
<div class="a" style="left:392px;top:379px;width:1px;height:25px;background:#d4d4d4"></div>
<div class="a" style="left:502px;top:379px;width:1px;height:25px;background:#d4d4d4"></div>
<div class="a" style="left:702px;top:379px;width:1px;height:25px;background:#d4d4d4"></div>
<div class="a" style="left:922px;top:379px;width:1px;height:25px;background:#d4d4d4"></div>
<div class="a" style="left:1012px;top:379px;width:1px;height:25px;background:#d4d4d4"></div>
<div class="t b" style="left:357px;top:384px;color:#000">403</div>
<div class="a" style="left:397px;top:381px;width:100px;height:21px;border:1px solid #b4b4b4;background:#fff"></div>
<svg class="a" style="left:402px;top:382px" width="22" height="20"><use href="#i-donedoc" width="100%" height="100%"/></svg>
<div class="t b" style="left:427px;top:384px">выполнено</div>
<div class="t b" style="left:507px;top:384px;color:#000">техническое обслуживание</div>
<div class="t b" style="left:709px;top:386px">2012-08-20 10:40 | без ограничений</div>
<div class="t b" style="left:1017px;top:384px;color:#000">Куйбышева 216/2</div>
<div class="a" style="left:1270px;top:129px;width:12px;height:276px;background:#fff"></div>
<div class="a" style="left:1273px;top:133px;width:5px;height:268px;background:#efefef"></div>
<div class="a" style="left:1270px;top:214px;width:12px;height:15px;border:1px solid #b0b0b0;background:#fcfcfc"></div>
<div class="a" style="left:324px;top:405px;width:958px;height:1px;background:#b8b8b8"></div>
<div class="t" style="left:356px;top:411px;letter-spacing:0">всего записей: 175 / 175</div>
<svg class="a" style="left:326px;top:109px" width="24" height="22"><use href="#i-list" width="100%" height="100%"/></svg>
<svg class="a" style="left:328px;top:134px" width="20" height="20"><use href="#i-cal" width="100%" height="100%"/></svg>
<svg class="a" style="left:328px;top:157px" width="20" height="20"><use href="#i-pencil" width="100%" height="100%"/></svg>
<svg class="a" style="left:327px;top:182px" width="22" height="20"><use href="#i-barrier" width="100%" height="100%"/></svg>
<svg class="a" style="left:328px;top:205px" width="20" height="20"><use href="#i-lock" width="100%" height="100%"/></svg>
<svg class="a" style="left:328px;top:229px" width="20" height="20"><use href="#i-docs" width="100%" height="100%"/></svg>
<svg class="a" style="left:328px;top:254px" width="20" height="20"><use href="#i-printer" width="100%" height="100%"/></svg>
<svg class="a" style="left:328px;top:277px" width="20" height="20"><use href="#i-idcard" width="100%" height="100%"/></svg>
<svg class="a" style="left:328px;top:302px" width="20" height="20"><use href="#i-bigx" width="100%" height="100%"/></svg>
<svg class="a" style="left:328px;top:326px" width="20" height="20"><use href="#i-refresh" width="100%" height="100%"/></svg>
<svg class="a" style="left:328px;top:352px" width="20" height="22"><use href="#i-playlist" width="100%" height="100%"/></svg>
<svg class="a" style="left:327px;top:379px" width="22" height="14"><use href="#i-inf" width="100%" height="100%"/></svg>
<svg class="a" style="left:327px;top:404px" width="22" height="22"><use href="#i-funnel" width="100%" height="100%"/></svg>
<svg class="a" style="left:336px;top:117px" width="12" height="12"><use href="#i-plus" width="100%" height="100%"/></svg>
<div class="a" style="left:327px;top:348px;width:22px;height:1px;background:#c0c8c8"></div>
<div class="a" style="left:795px;top:435px;width:16px;height:1px;background:#a4a4a4"></div><div class="a" style="left:795px;top:437px;width:16px;height:1px;background:#a4a4a4"></div><div class="a" style="left:795px;top:439px;width:16px;height:1px;background:#a4a4a4"></div>
<div class="a" style="left:322px;top:442px;width:961px;height:214px;background:#f0f0f0"></div>
<div class="a" style="left:328px;top:447px;width:160px;height:25px;border:1px solid #c0c0c0;border-bottom:none;border-radius:3px 3px 0 0;background:linear-gradient(#e6e6e6,#dadada)"></div>
<div class="a" style="left:487px;top:447px;width:114px;height:24px;border:1px solid #c0c0c0;border-radius:3px 3px 0 0;background:linear-gradient(#f6f6f6,#e2e2e2)"></div>
<div class="t b" style="left:341px;top:453px">данные пользователя</div>
<div class="t b" style="left:501px;top:451px">данные тикета</div>
<div class="t" style="left:330px;top:474px;letter-spacing:0.05px">UID, Ф.И.О.:</div>
<div class="t" style="left:475px;top:474px;letter-spacing:0.12px">1787, Курский Олег Игоревич</div>
<div class="t" style="left:330px;top:494px;letter-spacing:0.05px">тариф:</div>
<div class="t" style="left:475px;top:494px;letter-spacing:0.12px">100 Мегабит</div>
<div class="t" style="left:330px;top:513px;letter-spacing:0.05px">договор:</div>
<div class="t" style="left:475px;top:513px;letter-spacing:0.12px">1787</div>
<div class="t" style="left:330px;top:532px;letter-spacing:0.05px">телефоны:</div>
<div class="t" style="left:475px;top:532px;letter-spacing:0.18px">385-29-34, 050-992-79-91, 050-992-79-91</div>
<div class="t" style="left:330px;top:551px;letter-spacing:0.05px">статус:</div>
<div class="t" style="left:475px;top:551px;letter-spacing:0.12px">обычный</div>
<div class="t" style="left:330px;top:570px;letter-spacing:0.05px">баланс / лимит (кредит):</div>
<div class="t" style="left:475px;top:570px;letter-spacing:0.12px">1.98 Грн / 0 Грн</div>
<div class="t" style="left:330px;top:589px;letter-spacing:0.05px">IP:</div>
<div class="t" style="left:475px;top:589px;letter-spacing:0.12px">10.10.30.15</div>
<div class="t" style="left:330px;top:608px;letter-spacing:0.05px">MAC:</div>
<div class="t" style="left:475px;top:608px;letter-spacing:0.12px">00:24:1D:52:2A:65</div>
<div class="t" style="left:330px;top:627px;letter-spacing:0.05px">роутер:</div>
<div class="t" style="left:475px;top:627px;letter-spacing:0.12px">нет</div>
<div class="a" style="left:751px;top:541px;width:1px;height:16px;background:#999"></div>
<div class="a" style="left:753px;top:541px;width:1px;height:16px;background:#999"></div>
<div class="a" style="left:755px;top:541px;width:1px;height:16px;background:#999"></div>
<div class="a" style="left:1069px;top:541px;width:1px;height:16px;background:#999"></div>
<div class="a" style="left:1071px;top:541px;width:1px;height:16px;background:#999"></div>
<div class="a" style="left:1073px;top:541px;width:1px;height:16px;background:#999"></div>
<div class="a" style="left:758px;top:447px;width:308px;height:204px;border:1px solid #b0b0b0;background:#f4f4f4"></div>
<div class="a" style="left:759px;top:448px;width:28px;height:202px;background:#f0f0f0;border-right:1px solid #b8b8b8"></div>
<div class="a" style="left:787px;top:448px;width:278px;height:25px;background:linear-gradient(#fff,#fcfcfc 40%,#e8e8e8);border-bottom:1px solid #b8b8b8"></div>
<div class="t b" style="left:794px;top:453px">примечание (2/2)</div>
<div class="a" style="left:787px;top:531px;width:278px;height:60px;background:#80ccfc"></div>
<div class="a" style="left:1056px;top:478px;width:6px;height:48px;background:#e8e8e8"></div>
<div class="a" style="left:1056px;top:537px;width:6px;height:48px;background:#74bef0"></div>
<div class="t" style="left:792px;top:478px;letter-spacing:0"><span class="b" style="color:#1a9a64">malaya</span>: поставлено в работу:</div>
<div class="t" style="left:792px;top:537px;letter-spacing:0"><span class="b" style="color:#1a9a64">malaya</span>: выполнено:</div>
<svg class="a" style="left:761px;top:452px" width="22" height="22"><use href="#i-docs" width="100%" height="100%"/></svg>
<svg class="a" style="left:762px;top:477px" width="20" height="20"><use href="#i-pencil" width="100%" height="100%"/></svg>
<svg class="a" style="left:762px;top:501px" width="20" height="20"><use href="#i-search" width="100%" height="100%"/></svg>
<svg class="a" style="left:762px;top:526px" width="20" height="20"><use href="#i-bigx" width="100%" height="100%"/></svg>
<svg class="a" style="left:761px;top:557px" width="22" height="14"><use href="#i-inf" width="100%" height="100%"/></svg>
<svg class="a" style="left:762px;top:626px" width="20" height="20"><use href="#i-clock" width="100%" height="100%"/></svg>
<div class="a" style="left:762px;top:549px;width:22px;height:1px;background:#c0c8c8"></div>
<div class="a" style="left:762px;top:623px;width:22px;height:1px;background:#c0c8c8"></div>
<div class="a" style="left:1076px;top:447px;width:202px;height:204px;border:1px solid #b0b0b0;background:#fff"></div>
<div class="a" style="left:1077px;top:448px;width:200px;height:25px;background:linear-gradient(#fff,#fcfcfc 40%,#e8e8e8);border-bottom:1px solid #b8b8b8"></div>
<div class="t b" style="left:1084px;top:453px">исполнители</div>
<div class="a" style="left:1077px;top:473px;width:200px;height:25px;background:#80ccfc"></div>
<div class="a" style="left:1077px;top:498px;width:200px;height:25px;background:#fff"></div>
<div class="a" style="left:1077px;top:523px;width:200px;height:25px;background:#f4f4f4"></div>
<div class="a" style="left:1077px;top:548px;width:200px;height:25px;background:#fff"></div>
<div class="a" style="left:1077px;top:573px;width:200px;height:25px;background:#f4f4f4"></div>
<div class="a" style="left:1077px;top:598px;width:200px;height:25px;background:#fff"></div>
<div class="a" style="left:1077px;top:623px;width:200px;height:25px;background:#f4f4f4"></div>
<div class="t" style="left:1082px;top:478px;letter-spacing:0.1px">d-link</div>
<div class="t" style="left:1082px;top:503px;letter-spacing:0.33px">plemeshov</div>
<div class="a" style="left:11px;top:661px;width:1276px;height:21px;background:#e0e0e0"></div>
<svg class="a" style="left:12px;top:664px" width="16" height="14"><use href="#i-warn" width="100%" height="100%"/></svg>
<div class="t" style="left:36px;top:664px;letter-spacing:0">ожидайте...</div>
<div class="a" style="left:11px;top:682px;width:1276px;height:5px;background:linear-gradient(#d4d4d4 0,#bababa 1px,#bebebe 4px,#cacaca 5px)"></div>
<div class="a" style="left:11px;top:687px;width:1276px;height:34px;background:#e0e0e0"></div>
<div class="a b" style="left:17px;top:695px;font-size:14.5px;line-height:17px">привет, Сирожа</div>
<svg class="a" style="left:955px;top:695px" width="19" height="19"><use href="#i-refresh" width="100%" height="100%"/></svg>
<div class="a" style="left:978px;top:693px;width:1px;height:23px;background:#c4ccd0"></div>
<div class="a" style="left:1130px;top:693px;width:1px;height:23px;background:#c4ccd0"></div>
<div class="a" style="left:1160px;top:693px;width:1px;height:23px;background:#c4ccd0"></div>
<div class="a" style="left:1256px;top:693px;width:1px;height:23px;background:#c4ccd0"></div>
<div class="t b" style="left:984px;top:697px;letter-spacing:-0.2px">непрочитанных: 0/8</div>
<div class="a" style="left:1104px;top:693px;width:24px;height:23px;border:1px solid #777;background:#d8d8d8;box-shadow:inset 1px 1px 2px #999"><svg class="a" style="left:1px;top:1px" width="20" height="20"><use href="#i-bubble" width="100%" height="100%"/></svg></div>
<div class="a" style="left:1133px;top:692px;width:25px;height:25px;border:1px solid #666;background:#e4e4e4;box-shadow:inset 1px 1px 2px #888"><svg class="a" style="left:0;top:0" width="23" height="23"><use href="#i-speaker" width="100%" height="100%"/></svg></div>
<svg class="a" style="left:1165px;top:694px" width="20" height="20"><use href="#i-clock" width="100%" height="100%"/></svg>
<div class="t b" style="left:1191px;top:697px">18 : 12 : 12</div>
<svg class="a" style="left:1261px;top:694px" width="21" height="21"><use href="#i-info" width="100%" height="100%"/></svg>
</body></html>
